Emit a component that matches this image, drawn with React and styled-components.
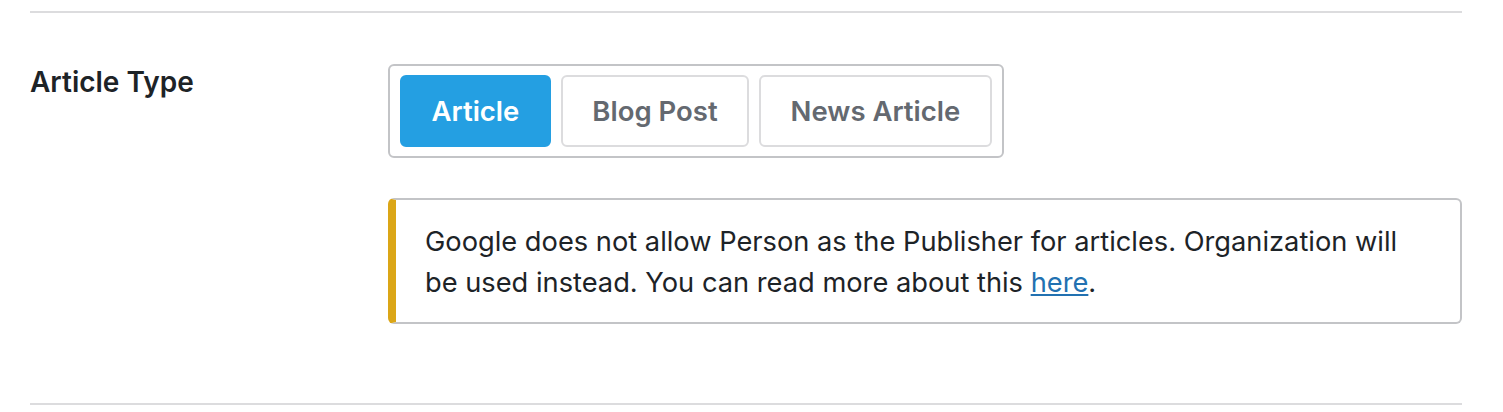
import React, { useState } from 'react';
import styled, { createGlobalStyle } from 'styled-components';

const GlobalStyle = createGlobalStyle`
    body {
        margin: 0;
        background: #fff;
        font-family: Inter, "Noto Sans", sans-serif;
        color: #1d2327;
    }
`

const types = ['Article', 'Blog Post', 'News Article'];

const App = () => {
    const [selected, setSelected] = useState('Article');

    return (
        <Page>
            <GlobalStyle />
            <Divider />
            <Row>
                <Label>Article Type</Label>
                <Field>
                    <ButtonGroup>
                        {types.map((type) => (
                            <TypeButton
                                key={type}
                                active={type === selected ? 1 : 0}
                                onClick={() => setSelected(type)}
                            >
                                {type}
                            </TypeButton>
                        ))}
                    </ButtonGroup>
                    <Notice>
                        Google does not allow Person as the Publisher for articles. Organization will<br />
                        be used instead. You can read more about this <NoticeLink href="#">here</NoticeLink>.
                    </Notice>
                </Field>
            </Row>
            <Divider />
        </Page>
    )
}

const Page = styled.div`
    padding: 11px 41px 0 30px;
`

const Divider = styled.div`
    height: 2px;
    background: #dcdcde;
`

const Row = styled.div`
    display: flex;
    padding: 51px 0 79px;
`

const Label = styled.div`
    width: 358px;
    flex-shrink: 0;
    font-size: 28px;
    font-weight: 600;
    line-height: 1.3;
    color: #1d2327;
`

const Field = styled.div`
    flex: 1;
    display: flex;
    flex-direction: column;
    align-items: flex-start;
    gap: 40px;
`

const ButtonGroup = styled.div`
    display: flex;
    gap: 10px;
    padding: 9px 10px;
    border: 2px solid #c3c4c7;
    border-radius: 6px;
`

const TypeButton = styled.button`
    height: 72px;
    padding: 0 29.5px;
    border-radius: 6px;
    border: 2px solid ${(props) => props.active ? '#249fe2' : '#dcdcde'};
    background: ${(props) => props.active ? '#249fe2' : '#fff'};
    color: ${(props) => props.active ? '#fff' : '#646970'};
    font-family: inherit;
    font-size: 27.5px;
    font-weight: 600;
    cursor: pointer;
`

const Notice = styled.p`
    box-sizing: border-box;
    width: 100%;
    margin: 0;
    padding: 21px 29px 19px;
    border: 2px solid #c3c4c7;
    border-left: 8px solid #dba617;
    border-radius: 6px;
    font-size: 27.25px;
    line-height: 41px;
    color: #1d2327;
    white-space: nowrap;
`

const NoticeLink = styled.a`
    color: #2271b1;
    text-decoration: underline;
`

export default App;
